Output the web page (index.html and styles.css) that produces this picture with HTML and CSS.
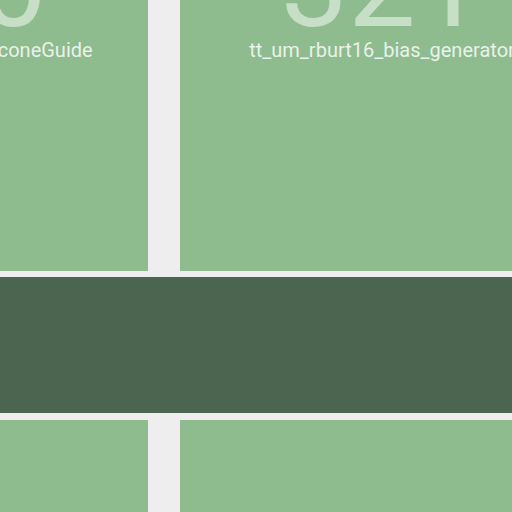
FILE: index.html
```html
<!DOCTYPE html>
<html>
<head>
<meta charset="utf-8">
<link rel="stylesheet" href="styles.css">
</head>
<body>
<div class="page">
  <div class="row">
    <div class="tile">
      <div class="num">320</div>
      <div class="label">tt_um_ringosc_cnt_SiliconeGuide</div>
    </div>
    <div class="tile">
      <div class="num">321</div>
      <div class="label">tt_um_rburt16_bias_generator</div>
    </div>
  </div>
  <div class="band"></div>
  <div class="row row-bottom">
    <div class="tile"></div>
    <div class="tile"></div>
  </div>
</div>
</body>
</html>
```

FILE: styles.css
```css
html, body {
  margin: 0;
  padding: 0;
  background: #eeeeee;
  overflow: hidden;
  width: 512px;
  height: 512px;
}
.page {
  display: flex;
  flex-direction: column;
  margin-top: -85px;
  font-family: Roboto, "Noto Sans", sans-serif;
}
.row {
  display: flex;
  gap: 32px;
  margin-left: -256px;
}
.tile {
  flex: none;
  width: 404px;
  height: 356px;
  background: #8fbc8f;
  box-sizing: border-box;
  padding-top: 20px;
  display: flex;
  flex-direction: column;
  align-items: center;
}
.num {
  font-size: 120px;
  line-height: 100px;
  font-weight: 400;
  color: rgba(255, 255, 255, 0.5);
  white-space: nowrap;
}
.label {
  margin-top: 3px;
  font-size: 20px;
  line-height: 24px;
  color: rgba(255, 255, 255, 0.82);
  white-space: nowrap;
}
.band {
  margin-top: 6px;
  height: 136px;
  background: #4c6550;
}
.row-bottom {
  margin-top: 7px;
}
```
